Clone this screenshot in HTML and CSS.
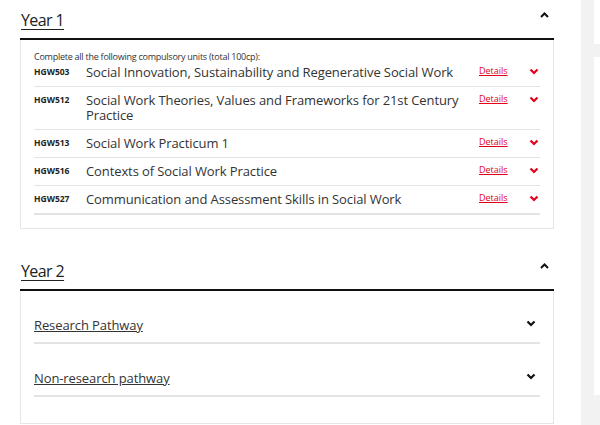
FILE: index.html
```html
<!DOCTYPE html>
<html lang="en">
<head>
<meta charset="utf-8">
<title>Course structure</title>
<link rel="stylesheet" href="styles.css">
</head>
<body>
<div class="page">
  <main class="main">
    <section class="year">
      <div class="year-head">
        <h2 class="year-title">Year 1</h2>
        <svg class="chev-up" width="9" height="6" viewBox="0 0 9 6"><polyline points="1,5 4.5,1.5 8,5" fill="none" stroke="#111" stroke-width="2"/></svg>
      </div>
      <div class="card card-units">
        <p class="intro">Complete all the following compulsory units (total 100cp):</p>
        <div class="unit first">
          <span class="code">HGW503</span>
          <span class="title">Social Innovation, Sustainability and Regenerative Social Work</span>
          <a class="details" href="#">Details</a>
          <svg class="chev-red" width="10" height="7" viewBox="0 0 10 7"><polyline points="1.5,1.5 5,5 8.5,1.5" fill="none" stroke="#e2001a" stroke-width="2.2"/></svg>
        </div>
        <div class="unit">
          <span class="code">HGW512</span>
          <span class="title">Social Work Theories, Values and Frameworks for 21st Century Practice</span>
          <a class="details" href="#">Details</a>
          <svg class="chev-red" width="10" height="7" viewBox="0 0 10 7"><polyline points="1.5,1.5 5,5 8.5,1.5" fill="none" stroke="#e2001a" stroke-width="2.2"/></svg>
        </div>
        <div class="unit">
          <span class="code">HGW513</span>
          <span class="title">Social Work Practicum 1</span>
          <a class="details" href="#">Details</a>
          <svg class="chev-red" width="10" height="7" viewBox="0 0 10 7"><polyline points="1.5,1.5 5,5 8.5,1.5" fill="none" stroke="#e2001a" stroke-width="2.2"/></svg>
        </div>
        <div class="unit">
          <span class="code">HGW516</span>
          <span class="title">Contexts of Social Work Practice</span>
          <a class="details" href="#">Details</a>
          <svg class="chev-red" width="10" height="7" viewBox="0 0 10 7"><polyline points="1.5,1.5 5,5 8.5,1.5" fill="none" stroke="#e2001a" stroke-width="2.2"/></svg>
        </div>
        <div class="unit last">
          <span class="code">HGW527</span>
          <span class="title">Communication and Assessment Skills in Social Work</span>
          <a class="details" href="#">Details</a>
          <svg class="chev-red" width="10" height="7" viewBox="0 0 10 7"><polyline points="1.5,1.5 5,5 8.5,1.5" fill="none" stroke="#e2001a" stroke-width="2.2"/></svg>
        </div>
      </div>
    </section>

    <section class="year year-2">
      <div class="year-head">
        <h2 class="year-title">Year 2</h2>
        <svg class="chev-up" width="9" height="6" viewBox="0 0 9 6"><polyline points="1,5 4.5,1.5 8,5" fill="none" stroke="#111" stroke-width="2"/></svg>
      </div>
      <div class="card card-paths">
        <div class="path">
          <a class="path-link" href="#">Research Pathway</a>
          <svg class="chev-down" width="10" height="7" viewBox="0 0 10 7"><polyline points="1.5,1.5 5,5 8.5,1.5" fill="none" stroke="#111" stroke-width="2.2"/></svg>
        </div>
        <div class="path">
          <a class="path-link" href="#">Non-research pathway</a>
          <svg class="chev-down" width="10" height="7" viewBox="0 0 10 7"><polyline points="1.5,1.5 5,5 8.5,1.5" fill="none" stroke="#111" stroke-width="2.2"/></svg>
        </div>
      </div>
    </section>
  </main>
  <aside class="side">
    <div class="side-box side-box-top"></div>
    <div class="side-box side-box-main"></div>
  </aside>
</div>
</body>
</html>
```

FILE: styles.css
```css
* { box-sizing: border-box; }

html, body {
  margin: 0;
  padding: 0;
  background: #fff;
  font-family: "Open Sans", "Liberation Sans", sans-serif;
  color: #333;
}

.page {
  display: flex;
  width: 600px;
  height: 425px;
  overflow: hidden;
}

.main {
  flex: 0 0 581px;
  padding: 0 27px 0 20px;
}

.side {
  flex: 1;
  background: #f2f2f2;
  padding-left: 13px;
  display: flex;
  flex-direction: column;
}

.side-box { background: #fff; }
.side-box-top { height: 44px; }
.side-box-main { height: 338px; margin-top: 13px; }

.year-head {
  height: 40px;
  border-bottom: 2px solid #111;
  display: flex;
  align-items: flex-start;
  justify-content: space-between;
}

.year-title {
  margin: 8px 0 0 1px;
  font-size: 16px;
  font-weight: 400;
  letter-spacing: -0.6px;
  line-height: 24px;
  color: #222;
  text-decoration: underline;
  text-underline-offset: 3px;
  text-decoration-thickness: 1px;
}

.chev-up {
  margin-top: 12px;
  margin-right: 5px;
}

.year-2 { margin-top: 22px; }

.card {
  border: 1px solid #e6e6e6;
  border-top: none;
  padding: 0 13px;
}

.card-units { padding-top: 12px; padding-bottom: 13px; }

.intro {
  margin: 0 0 3px 0;
  font-size: 9px;
  letter-spacing: -0.25px;
  line-height: 10px;
  color: #333;
}

.unit {
  display: grid;
  grid-template-columns: 52px 1fr 50px 11px;
  align-items: start;
  padding: 6px 0 6px;
  border-bottom: 1px solid #e3e3e3;
}

.unit.first { padding-top: 0; }
.unit.last { border-bottom: 2px solid #e3e3e3; }

.code {
  font-size: 8.5px;
  font-weight: 700;
  line-height: 12px;
  padding-top: 1px;
  color: #222;
}

.title {
  font-size: 13px;
  letter-spacing: -0.1px;
  line-height: 15px;
  color: #333;
  padding-right: 14px;
}

.details {
  font-size: 9px;
  line-height: 12px;
  color: #e2001a;
  text-decoration: underline;
}

.chev-red { margin-top: 3px; }

.card-paths { padding-bottom: 26px; }

.path {
  display: flex;
  justify-content: space-between;
  align-items: center;
  padding: 25px 0 8px;
  border-bottom: 2px solid #e3e3e3;
}

.path-link {
  font-size: 13px;
  letter-spacing: -0.1px;
  line-height: 18px;
  color: #333;
  text-decoration: underline;
}

.chev-down { margin-right: 4px; margin-top: -4px; }
```
